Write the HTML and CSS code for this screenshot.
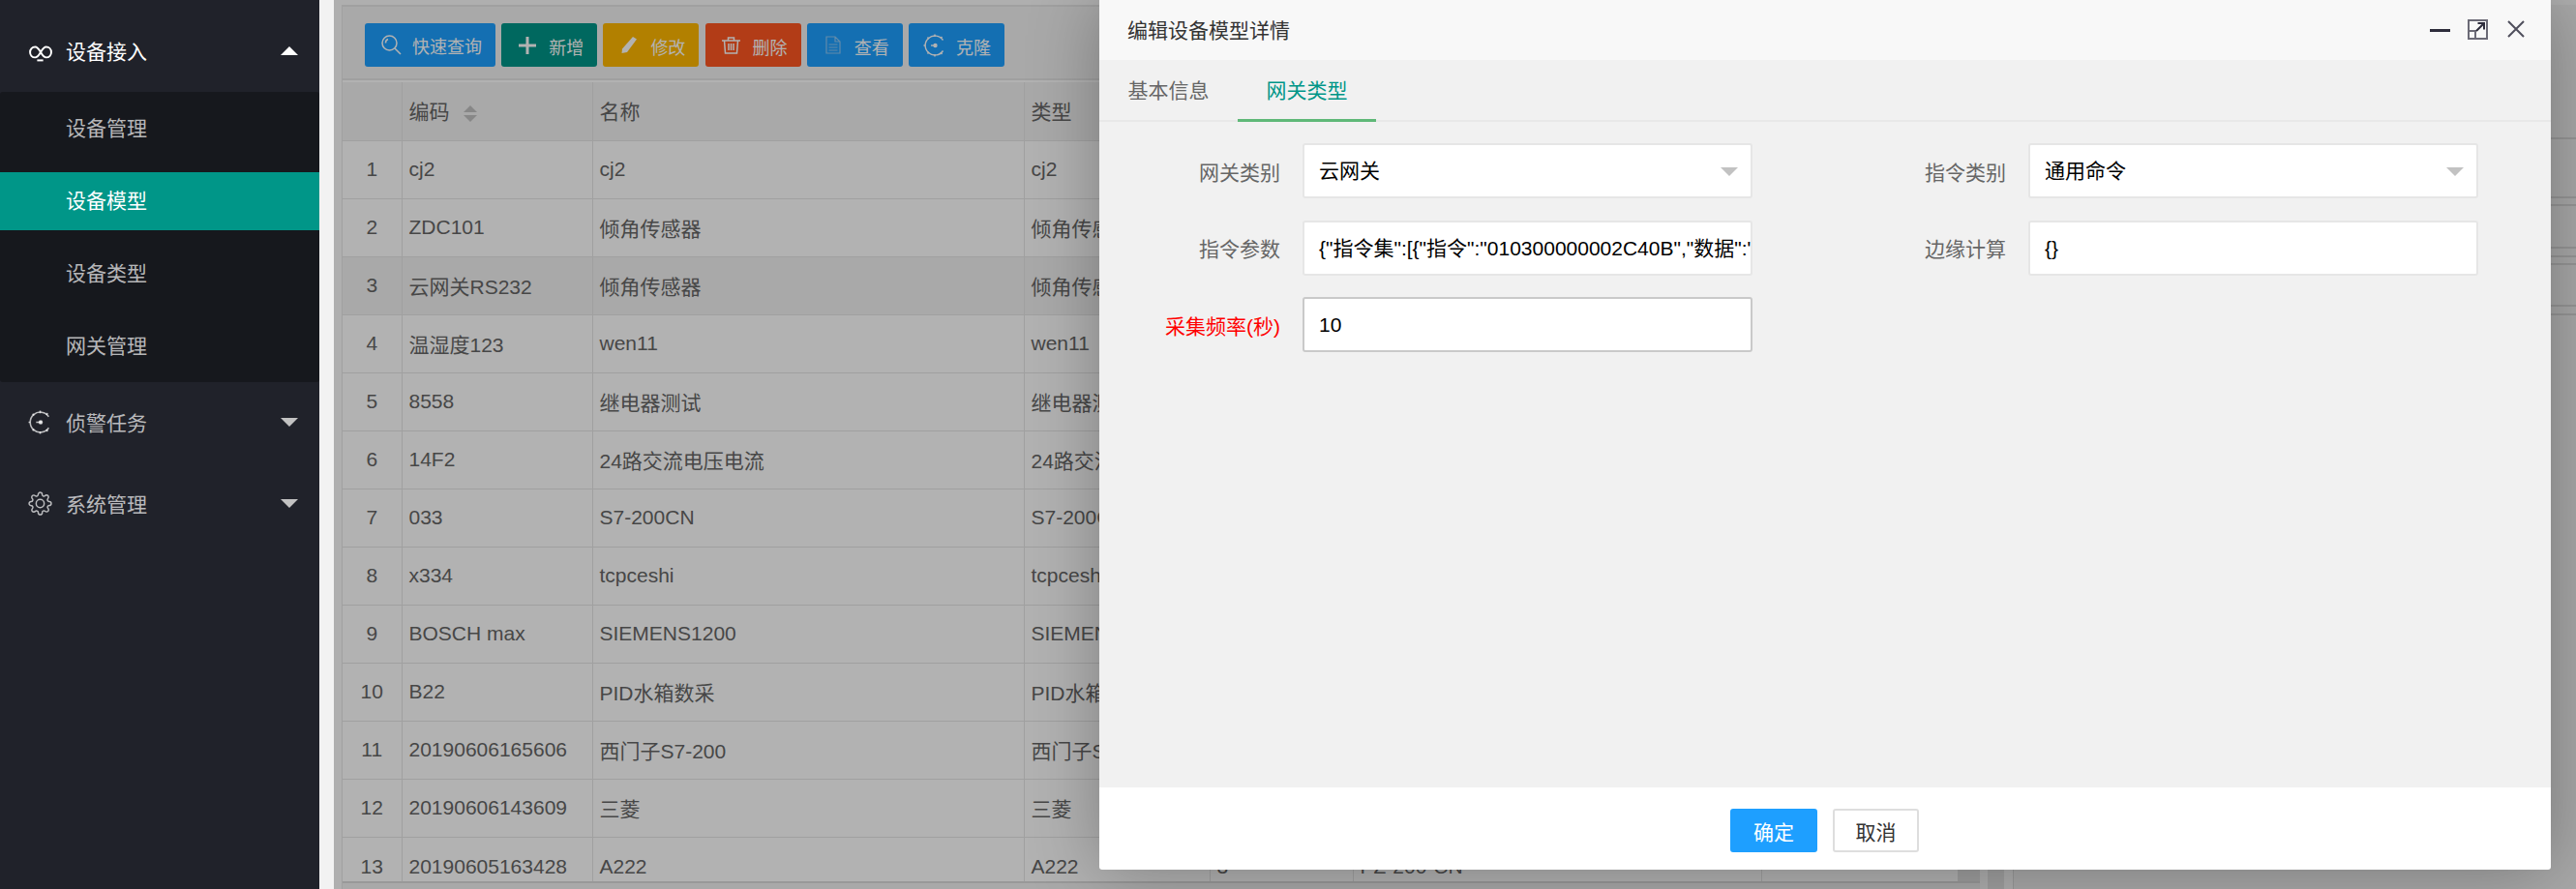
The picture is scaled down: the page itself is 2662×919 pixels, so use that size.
FILE: index.html
```html
<!DOCTYPE html>
<html lang="zh-CN">
<head>
    <meta charset="UTF-8">
    <title>编辑设备模型详情</title>
    <link rel="stylesheet" href="styles.css">
</head>
<body>
    <div class="app">
        <!-- Left menu -->
        <aside class="sidebar">
            <div class="nav-head open">
                <svg class="nav-icon" viewBox="0 0 24 24" fill="none" stroke="currentColor" stroke-width="1.9"><path d="M12.5 13.4C10.5 10 9 8.2 7 8.2 4 8.2 2 10.5 2 13.4S4 18.6 7 18.6c2 0 3.500-1.800 5.500-5.200s3.500-5.200 5.500-5.200c3 0 5 2.300 5 5.200s-2 5.200-5 5.200c-2 0-3.500-1.800-5.500-5.200z"/><path d="M9 21.5h6"/></svg>
                <span class="nav-text">设备接入</span>
                <i class="caret up"></i>
            </div>
            <div class="nav-child">
                <div class="nav-item">设备管理</div>
                <div class="nav-item active">设备模型</div>
                <div class="nav-item">设备类型</div>
                <div class="nav-item">网关管理</div>
            </div>
            <div class="nav-head">
                <svg class="nav-icon" viewBox="0 0 24 24" fill="none" stroke="currentColor" stroke-width="1.5"><path d="M20.5 6.500A10 10 0 1 0 20.500 17.500"/><path d="M12 .5v2.500M4.500 3.500l1.500 1.800M.5 12H2M4.500 20.500L6 18.700M12 23.500V21M19.500 21l-1.500-1.800M19.500 3l-1.500 1.800"/><path d="M8 12h5"/><circle cx="12.5" cy="12" r="1.4" fill="currentColor"/></svg>
                <span class="nav-text">侦警任务</span>
                <i class="caret"></i>
            </div>
            <div class="nav-head">
                <svg class="nav-icon" viewBox="0 0 24 24" fill="none" stroke="currentColor" stroke-width="1.4"><circle cx="12" cy="12" r="4"/><path d="M19.4 15a1.65 1.65 0 0 0 .33 1.82l.06.06a2 2 0 0 1 0 2.83 2 2 0 0 1-2.83 0l-.06-.06a1.65 1.65 0 0 0-1.82-.33 1.65 1.65 0 0 0-1 1.51V21a2 2 0 0 1-2 2 2 2 0 0 1-2-2v-.09A1.65 1.65 0 0 0 9 19.4a1.65 1.65 0 0 0-1.82.33l-.06.06a2 2 0 0 1-2.83 0 2 2 0 0 1 0-2.83l.06-.06a1.65 1.65 0 0 0 .33-1.82 1.65 1.65 0 0 0-1.51-1H3a2 2 0 0 1-2-2 2 2 0 0 1 2-2h.09A1.65 1.65 0 0 0 4.6 9a1.65 1.65 0 0 0-.33-1.82l-.06-.06a2 2 0 0 1 0-2.83 2 2 0 0 1 2.83 0l.06.06a1.65 1.65 0 0 0 1.82.33H9a1.65 1.65 0 0 0 1-1.51V3a2 2 0 0 1 2-2 2 2 0 0 1 2 2v.09a1.65 1.65 0 0 0 1 1.51 1.65 1.65 0 0 0 1.82-.33l.06-.06a2 2 0 0 1 2.83 0 2 2 0 0 1 0 2.83l-.06.06a1.65 1.65 0 0 0-.33 1.82V9a1.65 1.65 0 0 0 1.51 1H21a2 2 0 0 1 2 2 2 2 0 0 1-2 2h-.09a1.65 1.65 0 0 0-1.51 1z"/></svg>
                <span class="nav-text">系统管理</span>
                <i class="caret"></i>
            </div>
        </aside>

        <!-- Page behind the dialog -->
        <main class="content">
            <section class="panel">
                <div class="toolbar">
                    <a class="btn blue search">
                        <span class="btn-icon"><svg width="23" height="21" viewBox="0 0 23 21" fill="none" stroke="currentColor" stroke-width="1.5"><circle cx="9.5" cy="8.5" r="7.5"/><path d="M5.500 8.500a4 4 0 0 1 2.500-4M15 14l6 6"/></svg></span>快速查询
                    </a>
                    <a class="btn green">
                        <span class="btn-icon"><svg width="18" height="18" viewBox="0 0 18 18" fill="currentColor"><path d="M7.500 0h3v7.500H18v3h-7.500V18h-3v-7.500H0v-3h7.500z"/></svg></span>新增
                    </a>
                    <a class="btn yellow">
                        <span class="btn-icon"><svg width="18" height="17" viewBox="0 0 18 17" fill="currentColor"><path d="M13 0l4 2.500L7 16l-5.500 1 .5-4.500z"/></svg></span>修改
                    </a>
                    <a class="btn red">
                        <span class="btn-icon"><svg width="19" height="18" viewBox="0 0 19 18" fill="none" stroke="currentColor" stroke-width="1.5"><path d="M0 4h19M6.500 4V1h6v3M2.500 4l1 13h12l1-13M7 7v7M9.500 7v7M12 7v7"/></svg></span>删除
                    </a>
                    <a class="btn blue">
                        <span class="btn-icon"><svg class="doc" width="16" height="19" viewBox="0 0 16 19" fill="none" stroke="currentColor" stroke-width="1.2"><path d="M1 1h9l5 5v12H1zM10 1v5h5M3.500 9h9M3.500 12h9M3.500 15h9"/></svg></span>查看
                    </a>
                    <a class="btn blue">
                        <span class="btn-icon"><svg width="24" height="24" viewBox="0 0 24 24" fill="none" stroke="currentColor" stroke-width="1.4"><path d="M20.500 6.500A10 10 0 1 0 20.500 17.500"/><path d="M12 .5v2.500M4.500 3.500l1.500 1.800M.5 12H2M4.500 20.500L6 18.700M12 23.500V21M19.500 21l-1.500-1.800M19.500 3l-1.500 1.800"/><path d="M8 12h5"/><circle cx="12.5" cy="12" r="1.5" fill="currentColor"/></svg></span>克隆
                    </a>
                </div>
                <div class="grid-wrap">
                    <table class="grid">
                        <colgroup>
                            <col class="c-no"><col class="c-code"><col class="c-name"><col class="c-type"><col class="c-num"><col class="c-model"><col class="c-last">
                        </colgroup>
                        <thead>
                            <tr><th></th><th>编码 <i class="sort"></i></th><th>名称</th><th>类型</th><th></th><th></th><th></th></tr>
                        </thead>
                        <tbody>
                            <tr><td class="no">1</td><td>cj2</td><td>cj2</td><td>cj2</td><td></td><td></td><td></td></tr>
                            <tr><td class="no">2</td><td>ZDC101</td><td>倾角传感器</td><td>倾角传感器</td><td></td><td></td><td></td></tr>
                            <tr class="hover"><td class="no">3</td><td>云网关RS232</td><td>倾角传感器</td><td>倾角传感器</td><td></td><td></td><td></td></tr>
                            <tr><td class="no">4</td><td>温湿度123</td><td>wen11</td><td>wen11</td><td></td><td></td><td></td></tr>
                            <tr><td class="no">5</td><td>8558</td><td>继电器测试</td><td>继电器测试</td><td></td><td></td><td></td></tr>
                            <tr><td class="no">6</td><td>14F2</td><td>24路交流电压电流</td><td>24路交流电压电流</td><td></td><td></td><td></td></tr>
                            <tr><td class="no">7</td><td>033</td><td>S7-200CN</td><td>S7-200CN</td><td></td><td></td><td></td></tr>
                            <tr><td class="no">8</td><td>x334</td><td>tcpceshi</td><td>tcpceshi</td><td></td><td></td><td></td></tr>
                            <tr><td class="no">9</td><td>BOSCH max</td><td>SIEMENS1200</td><td>SIEMENS1200</td><td></td><td></td><td></td></tr>
                            <tr><td class="no">10</td><td>B22</td><td>PID水箱数采</td><td>PID水箱数采</td><td></td><td></td><td></td></tr>
                            <tr><td class="no">11</td><td>20190606165606</td><td>西门子S7-200</td><td>西门子S7-200</td><td></td><td></td><td></td></tr>
                            <tr><td class="no">12</td><td>20190606143609</td><td>三菱</td><td>三菱</td><td></td><td></td><td></td></tr>
                            <tr class="last"><td class="no">13</td><td>20190605163428</td><td>A222</td><td>A222</td><td>3</td><td>PZ-200-CN</td><td></td></tr>
                        </tbody>
                    </table>
                </div>
                <div class="pager"></div>
            </section>
            <div class="splitter"></div>
            <section class="side-panel">
                <div class="side-row"></div>
                <div class="side-row"></div>
                <div class="side-row"></div>
                <div class="side-row"></div>
                <div class="side-row"></div>
                <div class="side-row"></div>
                <div class="side-row"></div>
                <div class="side-row"></div>
            </section>
            <div class="shade"></div>
        </main>
    </div>

    <!-- Edit dialog -->
    <div class="dialog">
        <div class="dialog-title">
            <span>编辑设备模型详情</span>
            <div class="dialog-tools">
                <i class="tool-min"></i>
                <svg width="21" height="21" viewBox="0 0 21 21" fill="none" stroke-width="2"><path d="M1 1h19v19H1zM1 12h7v8" stroke="#6b6a76"/><path d="M9 12l8-8M10.500 4H17v6.500" stroke="#2e2d3c"/></svg>
                <svg width="18" height="18" viewBox="0 0 18 18" fill="none" stroke="#4f4e5c" stroke-width="2"><path d="M1 1l16 16M17 1L1 17"/></svg>
            </div>
        </div>
        <div class="dialog-body">
            <ul class="tabs">
                <li>基本信息</li>
                <li class="current">网关类型</li>
            </ul>
            <form class="form">
                <div class="form-item">
                    <label>网关类别</label>
                    <div class="field select"><span>云网关</span><i class="select-arrow"></i></div>
                </div>
                <div class="form-item">
                    <label>指令类别</label>
                    <div class="field select"><span>通用命令</span><i class="select-arrow"></i></div>
                </div>
                <div class="form-item">
                    <label>指令参数</label>
                    <div class="field"><span>{"指令集":[{"指令":"010300000002C40B","数据":"</span></div>
                </div>
                <div class="form-item">
                    <label>边缘计算</label>
                    <div class="field"><span>{}</span></div>
                </div>
                <div class="form-item">
                    <label class="required">采集频率(秒)</label>
                    <div class="field focus"><span>10</span></div>
                </div>
            </form>
        </div>
        <div class="dialog-foot">
            <button class="foot-btn ok" type="button">确定</button>
            <button class="foot-btn cancel" type="button">取消</button>
        </div>
    </div>
</body>
</html>
```

FILE: styles.css
```css
* {
    box-sizing: border-box;
    margin: 0;
    padding: 0;
}

html, body {
    height: 100%;
    overflow: hidden;
}

body {
    font-family: "Liberation Sans", "Noto Sans CJK SC", sans-serif;
    font-size: 21px;
    color: #666;
    background: #f2f2f2;
}

.app {
    display: flex;
    height: 919px;
}

/* Left menu */
.sidebar {
    width: 330px;
    flex: none;
    padding-top: 11px;
    background: #20222a;
    color: rgba(255, 255, 255, 0.7);
}

.nav-head {
    display: flex;
    align-items: center;
    height: 84px;
    padding: 0 22px 2px 29px;
}

.nav-head.open {
    color: #fff;
}

.nav-icon {
    width: 25px;
    height: 25px;
    margin-right: 14px;
}

.nav-text {
    flex: 1;
}

.caret {
    border: 9px solid transparent;
    border-top: 9px solid #c2c2c2;
    border-bottom: 0;
}

.caret.up {
    border-top: 0;
    border-bottom: 9px solid #fff;
}

.nav-child {
    display: flex;
    flex-direction: column;
    gap: 15px;
    padding: 8px 0 7px;
    background: #16181d;
    border-radius: 3px;
}

.nav-item {
    height: 60px;
    line-height: 60px;
    padding-left: 68px;
}

.nav-item.active {
    background: #009688;
    color: #fff;
}

/* Page behind the dialog */
.content {
    position: relative;
    flex: 1;
    min-width: 0;
    display: flex;
    padding: 5px 0 0 8px;
    background: #fbfbfb;
    border-left: 15px solid #f2f2f2;
    overflow: hidden;
}

.shade {
    position: absolute;
    top: 0;
    left: 0;
    right: 0;
    bottom: 0;
    background: rgba(0, 0, 0, 0.3);
}

.panel {
    width: 1693px;
    flex: none;
    background: #fff;
    border-top: 2px solid #e6e6e6;
    border-left: 1px solid #e6e6e6;
}

.toolbar {
    display: flex;
    gap: 6.2px;
    height: 76px;
    padding: 17px 0 0 23px;
    background: #f2f2f2;
    border-bottom: 2px solid #e6e6e6;
}

.btn {
    display: flex;
    align-items: center;
    height: 45px;
    padding: 3px 14px 0 12px;
    border-radius: 3px;
    font-size: 18px;
    color: #fff;
}

.btn.search {
    padding-top: 0;
}

.btn-icon {
    display: flex;
    align-items: center;
    justify-content: center;
    width: 30px;
    margin: -3px 7px 0 0;
}

.btn.search .btn-icon {
    margin-top: 0;
}

.doc {
    color: #8cc8f5;
}

.blue { background: #1e9fff; }
.green { background: #009688; }
.yellow { background: #ffb800; }
.red { background: #ff5722; }

.grid-wrap {
    margin-top: 2px;
    background: #e4e4e4;
}

.grid {
    width: 1669px;
    table-layout: fixed;
    border-collapse: collapse;
}

.c-no { width: 61px; }
.c-code { width: 197px; }
.c-name { width: 446px; }
.c-type { width: 192px; }
.c-num { width: 148px; }
.c-model { width: 422px; }

.grid th, .grid td {
    height: 60px;
    padding: 0 7px;
    border-bottom: 1px solid #e6e6e6;
    border-left: 1px solid #e6e6e6;
    font-weight: normal;
    text-align: left;
    white-space: nowrap;
    overflow: hidden;
    background: #fff;
}

.grid th:first-child, .grid td:first-child {
    border-left: 0;
}

.grid th {
    padding-bottom: 2px;
    background: #f2f2f2;
}

.grid td.no {
    padding: 0;
    text-align: center;
}

.grid tr.hover td {
    background: #f2f2f2;
}

.grid tr.last td {
    height: 45px;
    padding-top: 15px;
    line-height: 30px;
    border-bottom: 0;
}

.sort {
    display: inline-block;
    position: relative;
    width: 15px;
    height: 17px;
    margin-left: 9px;
    vertical-align: -3px;
}

.sort::before, .sort::after {
    content: "";
    position: absolute;
    left: 0;
    border: 7.5px solid transparent;
}

.sort::before {
    top: 0;
    border-top: 0;
    border-bottom: 7px solid #c2c2c2;
}

.sort::after {
    bottom: 0;
    border-bottom: 0;
    border-top: 7px solid #c2c2c2;
}

.pager {
    height: 10px;
    border-top: 2px solid #dcdcdc;
    background: #f2f2f2;
}

.splitter {
    width: 17px;
    flex: none;
    margin: 0 9px 0 8px;
    background: #e6e6e6;
}

.side-panel {
    flex: 1;
    padding-top: 137px;
    background: #f2f2f2;
    border-left: 1px solid #dcdcdc;
}

.side-row {
    height: 61px;
    border-top: 2px solid #d8d8d8;
}

.side-row:nth-child(2) { height: 8px; }
.side-row:nth-child(3) { height: 44px; }
.side-row:nth-child(4) { height: 9px; }
.side-row:nth-child(5) { height: 8px; }
.side-row:nth-child(6) { height: 43px; }
.side-row:nth-child(7) { height: 9px; }

/* Edit dialog */
.dialog {
    position: absolute;
    top: 0;
    left: 1136px;
    width: 1500px;
    height: 899px;
    display: flex;
    flex-direction: column;
    background: #fff;
    border-radius: 3px;
    box-shadow: 1px 1px 75px rgba(0, 0, 0, 0.3);
}

.dialog-title {
    display: flex;
    align-items: center;
    justify-content: space-between;
    height: 62px;
    flex: none;
    padding: 0 27px 2px 29px;
    background: #f8f8f8;
    color: #333;
}

.dialog-tools {
    display: flex;
    align-items: center;
    gap: 20px;
}

.tool-min {
    width: 21px;
    height: 3px;
    margin-top: 2px;
    margin-right: -2px;
    background: #2e2d3c;
}

.dialog-body {
    flex: 1;
    background: #f1f1f1;
}

.tabs {
    display: flex;
    height: 64px;
    list-style: none;
    border-bottom: 2px solid #e8e8e8;
}

.tabs li {
    height: 64px;
    line-height: 64px;
    padding: 0 29.5px;
}

.tabs li.current {
    color: #009688;
    border-bottom: 3px solid #5fb878;
}

.form {
    display: grid;
    grid-template-columns: 750px 750px;
    row-gap: 22.5px;
    padding-top: 22px;
}

.form-item {
    display: flex;
    align-items: center;
    gap: 23px;
}

.form-item label {
    width: 187px;
    text-align: right;
}

.form-item label.required {
    color: #f00;
}

.field {
    position: relative;
    width: 465px;
    height: 57px;
    padding: 0 15px;
    line-height: 54px;
    background: #fff;
    border: 2px solid #e6e6e6;
    border-radius: 3px;
    color: #000;
    white-space: nowrap;
    overflow: hidden;
}

.field.focus {
    border-color: #c9c9c9;
}

.select-arrow {
    position: absolute;
    top: 23px;
    right: 13px;
    border: 9px solid transparent;
    border-top: 9px solid #c2c2c2;
    border-bottom: 0;
}

.dialog-foot {
    display: flex;
    justify-content: center;
    gap: 16px;
    height: 85px;
    flex: none;
    padding: 22px 1px 0 0;
}

.foot-btn {
    width: 90px;
    height: 45px;
    background: #fff;
    border: 2px solid #dedede;
    border-radius: 3px;
    font: inherit;
    color: #333;
}

.foot-btn.cancel {
    width: 89px;
}

.foot-btn.ok {
    background: #1e9fff;
    border-color: #1e9fff;
    color: #fff;
}
```
